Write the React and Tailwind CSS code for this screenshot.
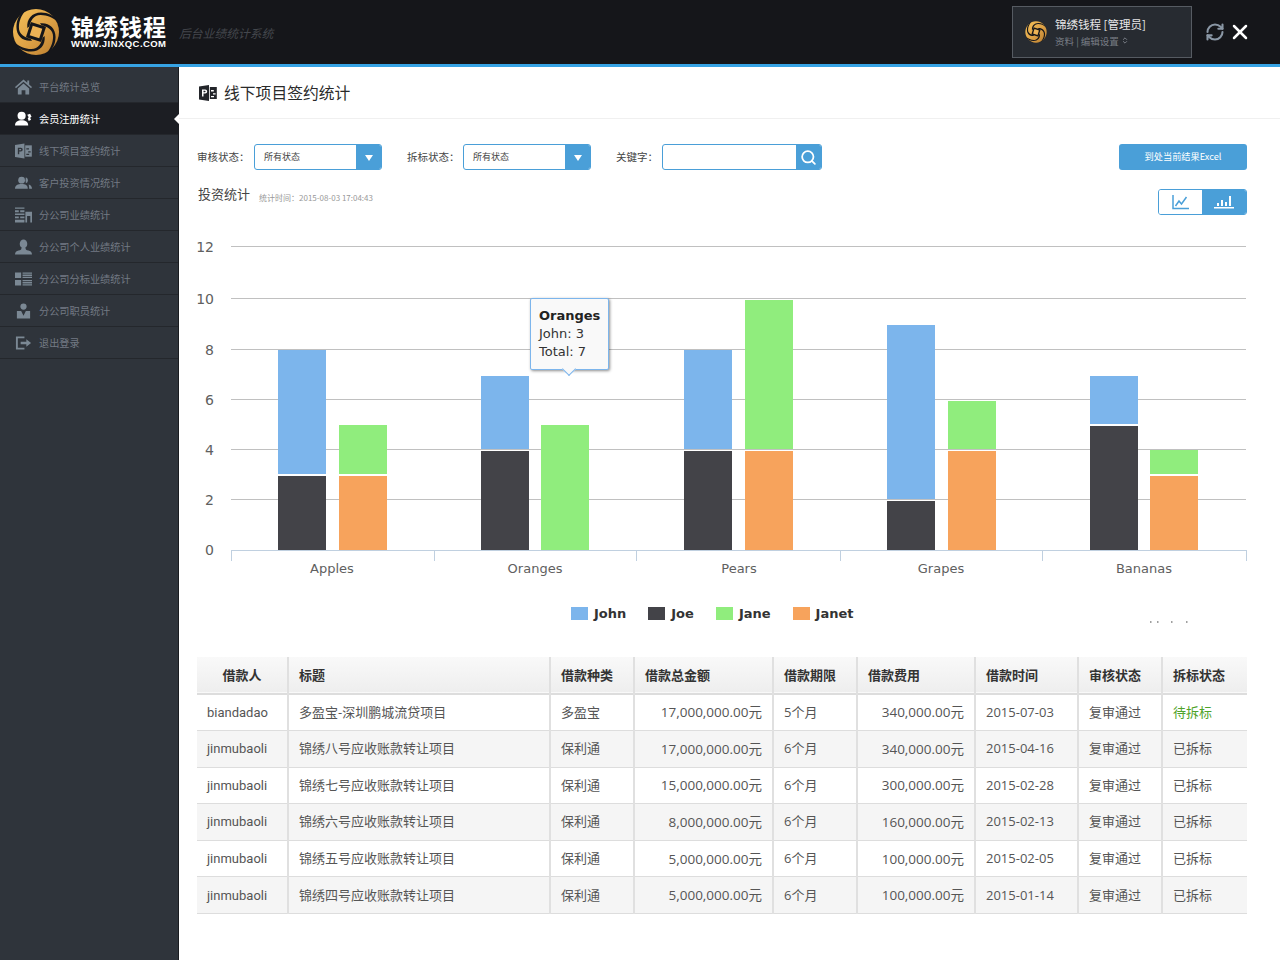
import React from "react";
import { Search, RefreshCw, X, ChevronsUpDown } from "lucide-react";

const menu = [
  { label: "平台统计总览", icon: "home" },
  { label: "会员注册统计", icon: "member", active: true },
  { label: "线下项目签约统计", icon: "project" },
  { label: "客户投资情况统计", icon: "people" },
  { label: "分公司业绩统计", icon: "building" },
  { label: "分公司个人业绩统计", icon: "person" },
  { label: "分公司分标业绩统计", icon: "list" },
  { label: "分公司职员统计", icon: "staff" },
  { label: "退出登录", icon: "logout" },
];

const columns = [
  { label: "借款人", w: "w-[91px]", center: true },
  { label: "标题", w: "w-[262px]" },
  { label: "借款种类", w: "w-[84px]" },
  { label: "借款总金额", w: "w-[139px]" },
  { label: "借款期限", w: "w-[84px]" },
  { label: "借款费用", w: "w-[118px]" },
  { label: "借款时间", w: "w-[103px]" },
  { label: "审核状态", w: "w-[84px]" },
  { label: "拆标状态", w: "w-[85px]" },
];

const rows = [
  ["biandadao", "多盈宝-深圳鹏城流贷项目", "多盈宝", "17,000,000.00元", "5个月", "340,000.00元", "2015-07-03", "复审通过", "待拆标"],
  ["jinmubaoli", "锦绣八号应收账款转让项目", "保利通", "17,000,000.00元", "6个月", "340,000.00元", "2015-04-16", "复审通过", "已拆标"],
  ["jinmubaoli", "锦绣七号应收账款转让项目", "保利通", "15,000,000.00元", "6个月", "300,000.00元", "2015-02-28", "复审通过", "已拆标"],
  ["jinmubaoli", "锦绣六号应收账款转让项目", "保利通", "8,000,000.00元", "6个月", "160,000.00元", "2015-02-13", "复审通过", "已拆标"],
  ["jinmubaoli", "锦绣五号应收账款转让项目", "保利通", "5,000,000.00元", "6个月", "100,000.00元", "2015-02-05", "复审通过", "已拆标"],
  ["jinmubaoli", "锦绣四号应收账款转让项目", "保利通", "5,000,000.00元", "6个月", "100,000.00元", "2015-01-14", "复审通过", "已拆标"],
];

// x, then [colour, top, bottom]
const bars = [
  [278, [["#7cb5ec", 350, 474], ["#434348", 476, 550]]],
  [339, [["#90ed7d", 425, 474], ["#f7a35c", 476, 550]]],
  [481, [["#7cb5ec", 376, 449], ["#434348", 451, 550]]],
  [541, [["#90ed7d", 425, 550]]],
  [684, [["#7cb5ec", 350, 449], ["#434348", 451, 550]]],
  [745, [["#90ed7d", 300, 449], ["#f7a35c", 451, 550]]],
  [887, [["#7cb5ec", 325, 499], ["#434348", 501, 550]]],
  [948, [["#90ed7d", 401, 449], ["#f7a35c", 451, 550]]],
  [1090, [["#7cb5ec", 376, 424], ["#434348", 426, 550]]],
  [1150, [["#90ed7d", 450, 474], ["#f7a35c", 476, 550]]],
];

const gridLines = [
  [12, 247],
  [10, 299],
  [8, 350],
  [6, 400],
  [4, 450],
  [2, 500],
  [0, 550],
];

const categories = [
  ["Apples", 332],
  ["Oranges", 535],
  ["Pears", 739],
  ["Grapes", 941],
  ["Bananas", 1144],
];

function Logo({ size, id }) {
  return (
    <svg width={size} height={size} viewBox="-28 -28 56 56">
      <defs>
        <linearGradient id={id} x1="0" y1="0" x2="1" y2="1">
          <stop offset="0" stopColor="#f6c25a" />
          <stop offset="0.55" stopColor="#dca045" />
          <stop offset="1" stopColor="#b77a2c" />
        </linearGradient>
      </defs>
      <circle r="23" fill={`url(#${id})`} />
      {[0, 90, 180, 270].map((a) => (
        <path
          key={a}
          d="M-9 -3 C-11 -12 -6 -19 3 -20 C10 -20.500 16 -19 21 -12 C15 -16.500 9 -18 3 -17.500 C-4 -17 -7 -10 -7 -5 Z"
          transform={`rotate(${a + 6})`}
          fill="#15161a"
        />
      ))}
      <rect x="-8" y="-8" width="16" height="16" transform="rotate(18)" fill="#15161a" />
      <rect x="-5" y="-5" width="10" height="10" transform="rotate(18)" fill="#eeb355" />
    </svg>
  );
}

function ProjectIcon({ className, letter = "#2f343b" }) {
  return (
    <svg viewBox="0 0 18 16" className={className} fill="currentColor">
      <path d="M0 1.600 10 0v16L0 14.400z" />
      <rect x="10.800" y="2" width="7" height="12" />
      <path d="M3 4.500h3.200a1.900 1.900 0 0 1 0 4H4.500v3H3zM4.500 5.800v1.400h1.400a.7.7 0 0 0 0-1.400z" fill={letter} />
      <path d="M12 5h2.800v1.400H12zM14 8.200h2.600v1.400H14zM12 11h3v1.200h-3z" fill={letter} />
    </svg>
  );
}

function MenuIcon({ name, className }) {
  if (name === "home")
    return (
      <svg viewBox="0 0 18 16" className={className} fill="currentColor">
        <path d="M9 0 13 3.500V1h2v4.300L18 8l-1 1.200L9 2.400 1 9.200 0 8z" />
        <path d="M3 9.500 9 4.300l6 5.200V16h-4v-4.500H7V16H3z" />
      </svg>
    );
  if (name === "project") return <ProjectIcon className={className} />;
  if (name === "member")
    return (
      <svg viewBox="0 0 18 16" className={className} fill="currentColor">
        <circle cx="7" cy="4.500" r="4.300" />
        <path d="M0 15c0-4 3-5.600 7-5.600s7 1.600 7 5.600z" />
        <path d="M13 3.500l3-1 1.500 3-1.500 1.200 1 2-2.500 1.500-1-3 1-1z" />
      </svg>
    );
  if (name === "people")
    return (
      <svg viewBox="0 0 18 16" className={className} fill="currentColor">
        <circle cx="7" cy="5" r="3.600" />
        <path d="M0 14c0-3.600 3-5 7-5s6.500 1.400 6.500 5z" />
        <path d="M11.500 1.800a3.400 3.400 0 0 1 0 6.400c-.4-2.200-.4-4.200 0-6.400zM14.500 9.500c2 .6 3.500 2 3.500 4.500h-3c0-1.800-.2-3.200-.5-4.500z" />
      </svg>
    );
  if (name === "building")
    return (
      <svg viewBox="0 0 18 16" className={className} fill="currentColor">
        <path d="M0 0h10v1.500H0zM0 3h4v2H0zM5.500 3H10v2H5.500zM0 6.500h10V8H0zM0 9.500h4v2H0zM5.500 9.500H10v2H5.500zM0 13h10v3H0z" />
        <path d="M11 4.500h7V16h-1.800V9h-3.400v7H11z" />
      </svg>
    );
  if (name === "person")
    return (
      <svg viewBox="0 0 18 16" className={className} fill="currentColor">
        <ellipse cx="9" cy="4.700" rx="4" ry="4.700" />
        <path d="M6.800 9c.3 1.500-1 2.200-3 2.800C1.500 12.500 0 13.500 0 16h18c0-2.500-1.500-3.500-3.800-4.200-2-.6-3.300-1.300-3-2.800z" />
      </svg>
    );
  if (name === "list")
    return (
      <svg viewBox="0 0 18 16" className={className} fill="currentColor">
        <path d="M0 1h6.500v6H0zM0 9h6.500v6H0z" />
        <path d="M8 1h10v1.400H8zM8 3.300h10v1.400H8zM8 5.600h10V7H8zM8 9h10v1.400H8zM8 11.300h10v1.400H8zM8 13.600h10V15H8z" />
      </svg>
    );
  if (name === "staff")
    return (
      <svg viewBox="0 0 18 16" className={className} fill="currentColor">
        <circle cx="9" cy="3.300" r="3.300" />
        <path d="M2 8h4.500L9 13l2.500-5H16v8H2z" />
      </svg>
    );
  return (
    <svg viewBox="0 0 18 16" className={className} fill="currentColor">
      <path d="M1 1h9v2H3v10h7v2H1z" />
      <path d="M6 6.700h6V4l5 4-5 4V9.300H6z" />
    </svg>
  );
}

function Chart() {
  return (
    <div className="relative">
      <svg width="1101" height="455" viewBox="179 200 1101 455" className="block">
        {gridLines.map(([v, y]) => (
          <g key={v}>
            {v > 0 && <line x1="231" x2="1246" y1={y - 0.5} y2={y - 0.5} stroke="#c0c0c0" strokeWidth="1" />}
            <text x="214" y={y + 5} textAnchor="end" fontSize="14" fill="#606060" fontFamily="DejaVu Sans">
              {v}
            </text>
          </g>
        ))}
        {bars.map(([x, parts]) =>
          parts.map(([color, top, bottom]) => (
            <rect key={`${x}${color}`} x={x} y={top} width="48" height={bottom - top} fill={color} />
          ))
        )}
        <line x1="231" x2="1246" y1="550.500" y2="550.500" stroke="#c0d0e0" />
        {[231, 434, 636, 840, 1042, 1246].map((x) => (
          <line key={x} x1={x + 0.5} x2={x + 0.5} y1="550" y2="561" stroke="#c0d0e0" />
        ))}
        {categories.map(([name, x]) => (
          <text key={name} x={x} y="573" textAnchor="middle" fontSize="13" fill="#606060" fontFamily="DejaVu Sans">
            {name}
          </text>
        ))}
        {[1150, 1157, 1171, 1186].map((x) => (
          <rect key={x} x={x} y="621" width="1.500" height="2" fill="#a0a0a0" />
        ))}
      </svg>

      {/* tooltip */}
      <div className="absolute left-[351px] top-[98px] w-[79px] h-[72px] bg-[#f9f9f9] border border-[#7cb5ec] rounded-[2px] shadow-[1px_1px_3px_rgba(0,0,0,0.45)] pl-[8px] pt-[8px] text-[13px] leading-[18px] text-[#333] font-['DejaVu_Sans',sans-serif]">
        <div className="font-bold text-[#222]">Oranges</div>
        <div>John: 3</div>
        <div>Total: 7</div>
        <div className="absolute left-[33px] top-[65px] w-[10px] h-[10px] rotate-45 bg-[#f9f9f9] border-r border-b border-[#7cb5ec]"></div>
      </div>

      {/* legend */}
      <div className="absolute left-[392px] top-[404px] flex items-center gap-[22px] text-[13px] font-bold text-[#333] font-['DejaVu_Sans',sans-serif]">
        <div className="flex items-center gap-[6px]">
          <span className="w-[17px] h-[13px] bg-[#7cb5ec]"></span>John
        </div>
        <div className="flex items-center gap-[6px]">
          <span className="w-[17px] h-[13px] bg-[#434348]"></span>Joe
        </div>
        <div className="flex items-center gap-[6px]">
          <span className="w-[17px] h-[13px] bg-[#90ed7d]"></span>Jane
        </div>
        <div className="flex items-center gap-[6px]">
          <span className="w-[17px] h-[13px] bg-[#f7a35c]"></span>Janet
        </div>
      </div>
    </div>
  );
}

function SelectBox({ label, labelClass }) {
  return (
    <div className="flex items-center">
      <span className={`text-[10.500px] text-[#444] ${labelClass}`}>{label}</span>
      <div className="w-[128px] h-[26px] flex border border-[#4a9fd8] rounded-[3px] overflow-hidden bg-white">
        <span className="flex-1 pl-[9px] text-[9px] leading-[24px] text-[#444]">所有状态</span>
        <span className="w-[25px] bg-[#4a9fd8] flex items-center justify-center">
          <span className="w-0 h-0 border-x-[4px] border-x-transparent border-t-[6px] border-t-white mt-[2px]"></span>
        </span>
      </div>
    </div>
  );
}

export default function App() {
  return (
    <div className="w-[1280px] h-[960px] overflow-hidden flex flex-col bg-white font-['Noto_Sans_CJK_SC',sans-serif]">
      {/* top bar */}
      <header className="h-[67px] shrink-0 bg-[#15161a] border-b-[3px] border-[#36a3e4] flex items-center">
        <div className="ml-[8px]">
          <Logo size={56} id="logoBig" />
        </div>
        <div className="ml-[7px] -mt-[2px] w-[100px] text-white">
          <div className="text-[23px] leading-[24px] font-bold tracking-[1px] whitespace-nowrap">锦绣钱程</div>
          <div className="text-[9.500px] leading-[11px] font-bold font-['Liberation_Sans',sans-serif] tracking-[0.450px] whitespace-nowrap">
            WWW.JINXQC.COM
          </div>
        </div>
        <div className="ml-[8px] mt-[2px] text-[11.800px] italic text-[#44474d]">后台业绩统计系统</div>

        <div className="ml-auto w-[180px] h-[52px] bg-[#272b31] border border-[#565b62] flex items-center pl-[10px]">
          <Logo size={26} id="logoSmall" />
          <div className="ml-[6px]">
            <div className="text-[11.500px] leading-[17px] text-[#e6e6e6] whitespace-nowrap">锦绣钱程 [管理员]</div>
            <div className="text-[9.500px] leading-[16px] text-[#777c84] flex items-center">
              资料 | 编辑设置
              <ChevronsUpDown className="w-[8px] h-[9px] ml-[2px]" strokeWidth={3} />
            </div>
          </div>
        </div>
        <RefreshCw className="ml-[13px] w-[20px] h-[20px] text-[#8a97a5]" strokeWidth={2.500} />
        <X className="ml-[3px] mr-[28px] w-[24px] h-[24px] text-white" strokeWidth={2.500} />
      </header>

      <div className="flex-1 flex min-h-0">
        {/* sidebar */}
        <aside className="w-[179px] shrink-0 bg-[#2f343b] border-r border-[#1a1c20] pt-[4px]">
          {menu.map((item) => (
            <div
              key={item.label}
              className={`relative h-[32px] flex items-center pl-[15px] border-b border-[#24272c] ${
                item.active ? "bg-[#1c1e23] text-white" : "text-[#737a84]"
              }`}
            >
              <MenuIcon
                name={item.icon}
                className={`w-[17px] h-[16px] shrink-0 ${item.active ? "text-white" : "text-[#7b8894]"}`}
              />
              <span className="ml-[7px] text-[10.200px]">{item.label}</span>
              {item.active && (
                <span className="absolute right-[-1px] top-[11px] w-0 h-0 border-y-[5px] border-y-transparent border-r-[5px] border-r-white"></span>
              )}
            </div>
          ))}
        </aside>

        {/* main */}
        <main className="flex-1 min-w-0">
          <div className="h-[52px] border-b border-[#f0f0f0] flex items-center pl-[20px]">
            <ProjectIcon className="w-[18px] h-[16px] text-[#23252a]" letter="#ffffff" />
            <h1 className="ml-[7px] mt-[1px] text-[15.800px] text-[#2a2a2a]">线下项目签约统计</h1>
          </div>

          <div className="pt-[25px] pl-[18px] pr-[33px] flex items-center">
            <SelectBox label="审核状态：" labelClass="w-[57px]" />
            <div className="ml-[25px]">
              <SelectBox label="拆标状态：" labelClass="w-[56px]" />
            </div>
            <div className="ml-[25px] flex items-center">
              <span className="text-[10.500px] text-[#444] w-[46px]">关键字：</span>
              <div className="w-[160px] h-[26px] flex border border-[#4a9fd8] rounded-[3px] overflow-hidden bg-white">
                <span className="flex-1"></span>
                <span className="w-[25px] bg-[#4a9fd8] flex items-center justify-center">
                  <Search className="w-[17px] h-[17px] text-white" strokeWidth={2.500} />
                </span>
              </div>
            </div>
            <button className="ml-auto w-[128px] h-[26px] rounded-[3px] bg-[#4a9fd8] text-white text-[9.200px]">
              到处当前结果Excel
            </button>
          </div>

          <div className="mt-[16px] pl-[19px] pr-[33px] flex items-start">
            <span className="-mt-[2px] text-[13px] leading-[20px] text-[#444]">投资统计</span>
            <span className="ml-[9px] mt-[5px] text-[8px] leading-[14px] text-[#999]">统计时间：2015-08-03 17:04:43</span>
            <div className="ml-auto mt-[3px] flex w-[89px] h-[26px] rounded-[3px] overflow-hidden border border-[#4a9fd8]">
              <span className="flex-1 bg-white flex items-center justify-center">
                <svg width="18" height="16" viewBox="0 0 18 16" fill="none" stroke="#4a9fd8" strokeWidth="1.500">
                  <path d="M1 1v13.500h16" />
                  <path d="M3.500 12l3.500-5 2.500 3 5-7" />
                </svg>
              </span>
              <span className="w-[44px] bg-[#4a9fd8] flex items-center justify-center">
                <svg width="20" height="16" viewBox="0 0 20 16" fill="#ffffff">
                  <path d="M0 13h20v1.500H0zM3 9h2v3H3zM7 6h2v6H7zM11 8h2v4h-2zM15 2h2v10h-2z" />
                </svg>
              </span>
            </div>
          </div>

          <div className="-mt-[15px]">
            <Chart />
          </div>

          <div className="ml-[18px] mt-[2px] w-[1050px]">
            <table className="w-full table-fixed border-collapse text-[13px] font-['Open_Sans','Noto_Sans_CJK_SC',sans-serif]">
              <thead>
                <tr className="h-[37px] bg-gradient-to-b from-[#f9f9f9] to-[#eeeeee] border-b-2 border-[#dddddd]">
                  {columns.map((c, i) => (
                    <th
                      key={c.label}
                      className={`${c.w} ${i > 0 ? "border-l-2 border-[#e0e0e0]" : ""} ${
                        c.center ? "text-center" : "text-left pl-[10px]"
                      } pt-[1px] text-[13px] font-bold text-[#333]`}
                    >
                      {c.label}
                    </th>
                  ))}
                </tr>
              </thead>
              <tbody>
                {rows.map((row, r) => (
                  <tr key={r} className={`h-[36.600px] border-b border-[#dddddd] ${r % 2 ? "bg-[#f5f5f5]" : "bg-white"}`}>
                    {row.map((cell, i) => (
                      <td
                        key={i}
                        className={`${i > 0 ? "border-l-2 border-[#e0e0e0]" : "font-['Roboto','Noto_Sans_CJK_SC',sans-serif]"} ${
                          i === 3 || i === 5 ? "text-right pr-[10px] text-[13.500px]" : "text-left pl-[10px]"
                        } ${cell === "待拆标" ? "text-[#4fa32a]" : "text-[#555]"} whitespace-nowrap`}
                      >
                        {cell}
                      </td>
                    ))}
                  </tr>
                ))}
              </tbody>
            </table>
          </div>
        </main>
      </div>
    </div>
  );
}
